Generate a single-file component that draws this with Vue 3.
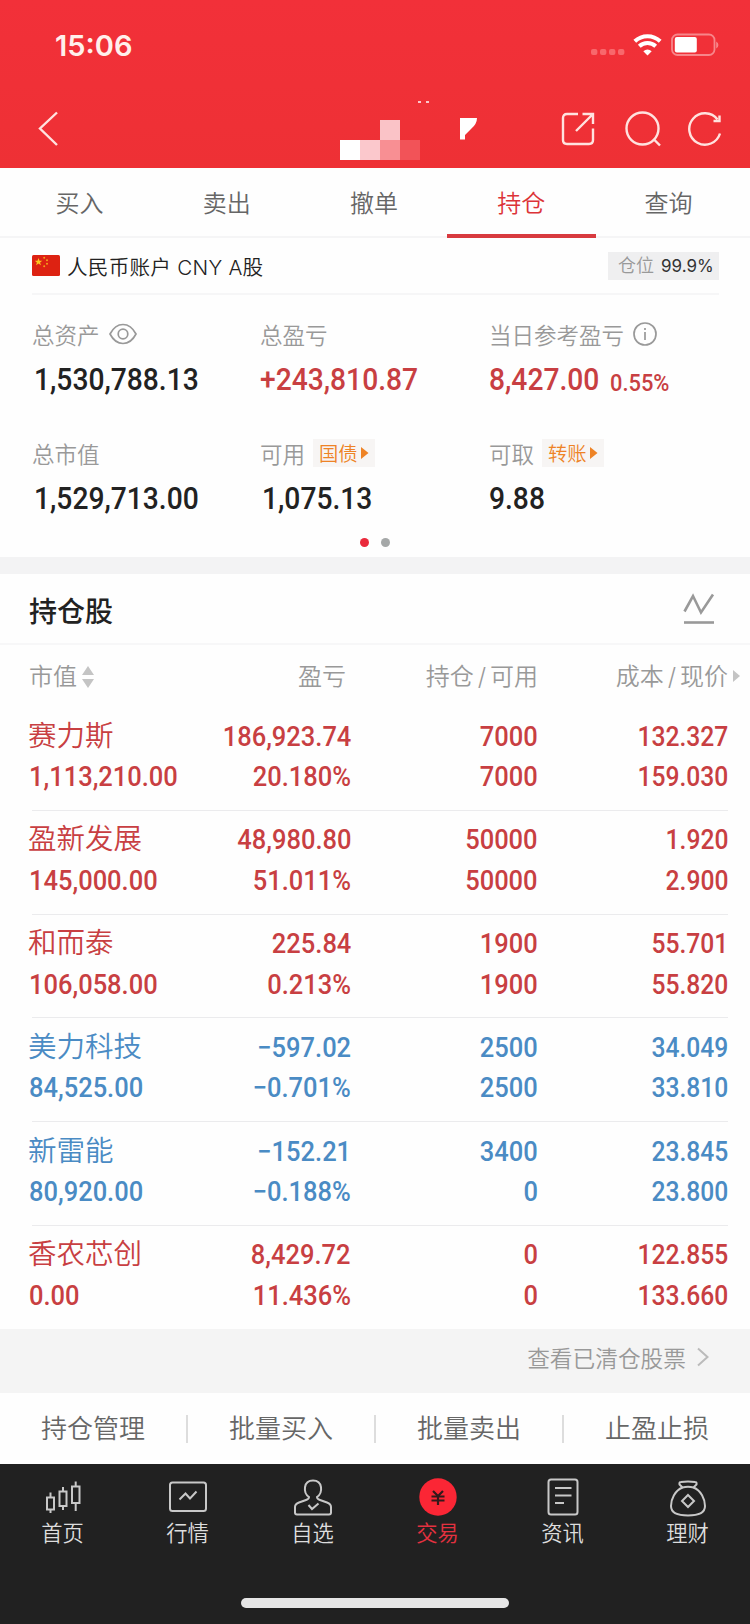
<template>
  <div class="page">
    <header class="header">
      <div class="status-bar">
        <span class="time">15:06</span>
        <div class="status-icons">
          <svg class="signal" width="34" height="6" viewBox="0 0 34 6">
            <rect v-for="n in 4" :key="n" :x="(n - 1) * 9" y="0" width="6.4" height="6" rx="2" />
          </svg>
          <svg class="wifi" width="29" height="22" viewBox="0 0 29 22">
            <path d="M1.8 7.2 A18.5 18.5 0 0 1 27.2 7.2" />
            <path d="M6.3 12.3 A12 12 0 0 1 22.7 12.3" />
            <path class="wifi-dot" d="M14.5 21.5 L10.3 17.2 Q14.5 13.6 18.7 17.2 Z" />
          </svg>
          <svg class="battery" width="48" height="24" viewBox="0 0 48 24">
            <rect class="case" x="1" y="1.5" width="42.5" height="20.5" rx="5.5" />
            <path class="cap" d="M45.2 8.5 Q47.4 9.5 47.4 12 Q47.4 14.5 45.2 15.5 Z" />
            <rect class="level" x="3.8" y="4" width="22" height="15.5" rx="2" />
          </svg>
        </div>
      </div>
      <div class="nav-bar">
        <svg class="back" width="22" height="36" viewBox="0 0 22 36">
          <path d="M20 1.5 L3 17.5 L20 34" />
        </svg>
        <svg class="title" width="140" height="64" viewBox="0 0 140 64">
          <rect x="0" y="43" width="20" height="20" fill="#ffffff" />
          <rect x="20" y="43" width="20" height="20" fill="#fbc8cc" />
          <rect x="40" y="23" width="20" height="20" fill="#fac3c7" />
          <rect x="40" y="43" width="20" height="20" fill="#f88f93" />
          <rect x="60" y="43" width="20" height="20" fill="#f25358" />
          <rect x="78" y="4" width="3" height="2" fill="#fbc8cc" />
          <rect x="86" y="4" width="3" height="2" fill="#fbc8cc" />
          <path d="M120 21 H137 Q137 27 131 32 L125 38 V42.5 H120 Z" fill="#ffffff" />
        </svg>
        <div class="nav-actions">
          <svg width="34" height="36" viewBox="0 0 34 36">
            <path d="M17 3 H6 Q2 3 2 7 V29 Q2 33 6 33 H28 Q32 33 32 29 V17.5" />
            <path d="M21.5 3 H32 V13 M15 20 L31.5 3.5" />
          </svg>
          <svg width="36" height="36" viewBox="0 0 36 36">
            <circle cx="17.5" cy="17.5" r="16" />
            <path d="M28.5 28 L35 34.5" />
          </svg>
          <svg width="34" height="36" viewBox="0 0 34 36">
            <path d="M32 22.5 A15.7 15.7 0 1 1 29.5 8.5" />
            <path d="M31.5 4.5 V10 H25.5" />
          </svg>
        </div>
      </div>
    </header>

    <nav class="tabs">
      <div v-for="tab in tabs" :key="tab" class="tab" :class="{ active: tab === activeTab }" @click="activeTab = tab">
        {{ tab }}
      </div>
    </nav>

    <section class="account">
      <div class="account-head">
        <svg class="flag" width="28" height="21" viewBox="0 0 28 21">
          <rect width="28" height="21" rx="1.5" fill="#dd2212" />
          <path fill="#fcc81e" d="M6.5 3 L7.5 5.7 L10.3 5.8 L8.1 7.5 L8.9 10.2 L6.5 8.6 L4.1 10.2 L4.9 7.5 L2.7 5.8 L5.5 5.7 Z" />
          <g fill="#f3a21c">
            <circle cx="12.2" cy="2.8" r="1" />
            <circle cx="15" cy="5.2" r="1" />
            <circle cx="15" cy="8.8" r="1" />
            <circle cx="12.2" cy="11.3" r="1" />
          </g>
        </svg>
        <span class="account-name">人民币账户 CNY A股</span>
        <div class="position">仓位 <b>99.9%</b></div>
      </div>

      <div class="assets">
        <div v-for="item in assets" :key="item.label" class="asset">
          <div class="asset-label">
            <span>{{ item.label }}</span>
            <svg v-if="item.icon === 'eye'" class="label-icon" width="28" height="22" viewBox="0 0 28 22">
              <path d="M1 11 Q6 1.5 14 1.5 T27 11 Q22 20.5 14 20.5 T1 11 Z" />
              <circle cx="14" cy="11" r="4.8" />
            </svg>
            <svg v-if="item.icon === 'info'" class="label-icon" width="24" height="24" viewBox="0 0 24 24">
              <circle cx="12" cy="12" r="11" />
              <path d="M12 10 V18 M12 6 V8" />
            </svg>
            <span v-if="item.link" class="chip">
              {{ item.link }}
              <svg width="8" height="12" viewBox="0 0 8 12"><path d="M0 0 L7.5 6 L0 12 Z" /></svg>
            </span>
          </div>
          <div class="asset-value" :class="{ up: item.up }">
            <span class="num" :class="{ inset: item.value[0] === '1' }">{{ item.value }}</span>
            <span v-if="item.rate" class="rate">{{ item.rate }}</span>
          </div>
        </div>
      </div>
      <div class="dots"><i class="on"></i><i></i></div>
    </section>

    <section class="holdings">
      <div class="holdings-head">
        <h2>持仓股</h2>
        <svg class="chart-icon" width="32" height="32" viewBox="0 0 32 32">
          <path d="M1.5 18.5 L10 3 L18 19.5 L30 1.5" />
          <path d="M1 29.5 H31" />
        </svg>
      </div>
      <div class="row columns">
        <div class="first">
          市值
          <svg width="12" height="22" viewBox="0 0 12 22">
            <path d="M6 0 L12 9 H0 Z M0 13 H12 L6 22 Z" />
          </svg>
        </div>
        <div class="profit-title">盈亏</div>
        <div>持仓<em>/</em>可用</div>
        <div class="price-title">
          成本<em>/</em>现价
          <svg class="more" width="7" height="12" viewBox="0 0 7 12"><path d="M0 0 L7 6 L0 12 Z" /></svg>
        </div>
      </div>
      <div v-for="s in stocks" :key="s.name" class="row stock" :class="s.down ? 'down' : 'up'">
        <div class="first">
          <p class="name">{{ s.name }}</p>
          <p><span class="num">{{ s.value }}</span></p>
        </div>
        <div v-for="(col, i) in s.cols" :key="i">
          <p v-for="(text, j) in col" :key="j"><span class="num">{{ text }}</span></p>
        </div>
      </div>
    </section>

    <div class="cleared">
      查看已清仓股票
      <svg width="12" height="20" viewBox="0 0 12 20"><path d="M1 1.5 L10.5 10 L1 18.5" /></svg>
    </div>

    <div class="actions">
      <div v-for="a in actions" :key="a" class="action">{{ a }}</div>
    </div>

    <footer class="tab-bar">
      <div class="menu">
        <div v-for="m in menu" :key="m.label" class="menu-item" :class="{ current: m.icon === 'trade' }">
          <svg width="40" height="40" viewBox="0 0 40 40">
            <g v-if="m.icon === 'home'">
              <path d="M4 20.5 H11 V32.5 H4 Z M16.5 14.5 H23.5 V29 H16.5 Z M29 9.5 H36.500 V26 H29 Z" />
              <path d="M7.500 15.500 V20.500 M7.500 32.500 V36 M20 10 V14.500 M20 29 V33 M32.700 4.500 V9.500 M32.700 26 V34" />
            </g>
            <g v-else-if="m.icon === 'market'">
              <rect x="2" y="5.5" width="36" height="28.5" rx="2.5" />
              <path d="M11.5 22.5 L17.5 16.5 L22 21.5 L28.5 14.5" />
            </g>
            <g v-else-if="m.icon === 'self'">
              <path d="M16 20 C10 16 10 3.500 20 3.500 S30 16 24 20 Q24 22 27 23 L34 25.500 Q38 27 38 30 V35.500 Q38 37.500 36 37.500 H4 Q2 37.500 2 35.500 V30 Q2 27 6 25.500 L13 23 Q16 22 16 20 Z" />
              <path d="M15.5 28 L19 32 L25.5 26.5" />
            </g>
            <g v-else-if="m.icon === 'trade'">
              <circle class="coin" cx="20" cy="20" r="18.7" />
              <path class="yen" d="M15 14 L20 19 L25 14 M13.5 19.5 H26.5 M13.5 23.5 H26.5 M20 19 V28" />
            </g>
            <g v-else-if="m.icon === 'news'">
              <rect x="5.5" y="2.5" width="29" height="35" rx="2.5" />
              <path d="M12 11 H28.5 M12 18.5 H28.5 M12 26 H21" />
            </g>
            <g v-else>
              <path d="M14.5 10.500 L11.5 7.500 Q11 5 13 5 Q20 4 27 5 Q29 5 28.5 7.500 L25.5 10.500 Q20 9 14.5 10.500 Z" />
              <path d="M14.5 10.500 C7 13.500 3 22 3 29 C3 36 9 38.500 20 38.500 S37 36 37 29 C37 22 33 13.500 25.5 10.500" />
              <path d="M20 18 L26 24 L20 30 L14 24 Z" />
            </g>
          </svg>
          <span>{{ m.label }}</span>
        </div>
      </div>
      <div class="home-indicator"></div>
    </footer>
  </div>
</template>

<script setup>
import { ref } from 'vue';

const tabs = ['买入', '卖出', '撤单', '持仓', '查询'];
const activeTab = ref('持仓');

const assets = ref([
  { label: '总资产', value: '1,530,788.13', icon: 'eye' },
  { label: '总盈亏', value: '+243,810.87', up: true },
  { label: '当日参考盈亏', value: '8,427.00', rate: '0.55%', up: true, icon: 'info' },
  { label: '总市值', value: '1,529,713.00' },
  { label: '可用', value: '1,075.13', link: '国债' },
  { label: '可取', value: '9.88', link: '转账' }
]);

// cols: 盈亏, 持仓/可用, 成本/现价
const stocks = ref([
  { name: '赛力斯', value: '1,113,210.00', cols: [['186,923.74', '20.180%'], ['7000', '7000'], ['132.327', '159.030']] },
  { name: '盈新发展', value: '145,000.00', cols: [['48,980.80', '51.011%'], ['50000', '50000'], ['1.920', '2.900']] },
  { name: '和而泰', value: '106,058.00', cols: [['225.84', '0.213%'], ['1900', '1900'], ['55.701', '55.820']] },
  { name: '美力科技', value: '84,525.00', down: true, cols: [['−597.02', '−0.701%'], ['2500', '2500'], ['34.049', '33.810']] },
  { name: '新雷能', value: '80,920.00', down: true, cols: [['−152.21', '−0.188%'], ['3400', '0'], ['23.845', '23.800']] },
  { name: '香农芯创', value: '0.00', cols: [['8,429.72', '11.436%'], ['0', '0'], ['122.855', '133.660']] }
]);

const actions = ['持仓管理', '批量买入', '批量卖出', '止盈止损'];

const menu = [
  { label: '首页', icon: 'home' },
  { label: '行情', icon: 'market' },
  { label: '自选', icon: 'self' },
  { label: '交易', icon: 'trade' },
  { label: '资讯', icon: 'news' },
  { label: '理财', icon: 'money' }
];
</script>

<style>
body {
  margin: 0;
  background: #fff;
}
</style>

<style scoped>
.page {
  width: 750px;
  height: 1624px;
  overflow: hidden;
  display: flex;
  flex-direction: column;
  background: #fefefe;
  font-family: Inter, "Noto Sans CJK SC", sans-serif;
  font-weight: 350;
  color: #222;
}

svg {
  display: block;
  flex: none;
  fill: none;
}

p,
h2 {
  margin: 0;
}

/* Header */
.header {
  height: 168px;
  flex: none;
  background: linear-gradient(#f23039, #ee3035);
}

.status-bar {
  height: 90px;
  display: flex;
  justify-content: space-between;
  padding: 0 31px 0 55px;
  box-sizing: border-box;
  align-items: center;
}

.time {
  font-size: 29px;
  font-weight: 600;
  color: #fff0ec;
}

.status-icons {
  display: flex;
  align-items: center;
}

.signal {
  fill: #f8686c;
  margin: 14px 8px 0 0;
}

.wifi {
  stroke: #fff;
  stroke-width: 4;
  margin-right: 9px;
}

.wifi-dot {
  fill: #fff;
  stroke: none;
}

.case {
  stroke: #f7868a;
  stroke-width: 1.8;
}

.cap {
  fill: #f7868a;
}

.level {
  fill: #fff;
}

.nav-bar {
  height: 78px;
  display: flex;
  align-items: center;
  padding: 0 28px 0 37px;
}

.back,
.nav-actions svg {
  stroke: #ffe2df;
  stroke-width: 2.4;
}

.title {
  margin: 0 auto 0 281px;
}

.nav-actions {
  display: flex;
  gap: 29px;
}

.nav-actions svg:first-child {
  margin-right: 1px;
}

.nav-actions svg:last-child {
  margin-left: -2px;
}

/* Tabs */
.tabs {
  height: 70px;
  flex: none;
  display: flex;
  padding: 0 8px 0 6px;
  box-sizing: border-box;
  border-bottom: 2px solid #f5f5f6;
}

.tab {
  flex: 1;
  height: 68px;
  line-height: 72px;
  text-align: center;
  font-size: 24px;
  color: #666;
  position: relative;
}

.tab.active {
  color: #dc3338;
}

.tab.active::after {
  content: '';
  position: absolute;
  left: -1px;
  right: -1px;
  bottom: -2px;
  height: 4px;
  background: #d83a3f;
}

/* Account */
.account {
  height: 319px;
  flex: none;
  border-bottom: 17px solid #f3f3f4;
}

.account-head {
  height: 57px;
  box-sizing: border-box;
  margin: 0 31px 0 32px;
  display: flex;
  align-items: center;
  border-bottom: 2px solid #f6f6f7;
}

.account-name {
  margin-left: 7px;
  font-size: 20.6px;
  letter-spacing: 0.25px;
}

.position {
  margin-left: auto;
  width: 111px;
  height: 28px;
  line-height: 28px;
  box-sizing: border-box;
  padding-left: 10px;
  background: #efeff0;
  color: #999;
  font-size: 18px;
  white-space: nowrap;
}

.position b {
  margin-left: 2px;
  font-size: 17px;
  font-weight: 400;
  color: #333;
}

.assets {
  display: grid;
  grid-template-columns: 228px 229px 1fr;
  grid-auto-rows: 119px;
  padding: 24px 0 0 32px;
}

.asset-label {
  height: 30px;
  display: flex;
  align-items: center;
  font-size: 22.5px;
  color: #999;
}

.label-icon {
  margin-left: 9px;
  stroke: #999;
  stroke-width: 1.7;
}

.chip {
  display: flex;
  align-items: center;
  gap: 3px;
  height: 28px;
  margin-left: 8px;
  padding: 0 6px;
  background: #f7f5f4;
  color: #ee8326;
  font-size: 19.3px;
}

.chip svg {
  fill: #ee8326;
}

.asset-value {
  height: 36px;
  line-height: 36px;
  margin-top: 13px;
  display: flex;
  font-size: 31px;
}

.num,
.rate {
  display: inline-block;
  font-family: Roboto, sans-serif;
  font-weight: 500;
  transform: scaleX(0.91);
  transform-origin: left;
}

.inset {
  margin-left: 2px;
}

.rate {
  font-size: 24px;
  margin-top: 3px;
}

.up {
  color: #c83f42;
}

.down {
  color: #4a8bc4;
}

.dots {
  display: flex;
  justify-content: center;
  gap: 12px;
  margin-top: -19px;
}

.dots i {
  width: 9px;
  height: 9px;
  border-radius: 50%;
  background: #a5a8a8;
}

.dots .on {
  background: #ea2a3c;
}

/* Holdings */
.holdings {
  height: 755px;
  flex: none;
}

.holdings-head {
  height: 71px;
  box-sizing: border-box;
  padding: 0 35px 0 29px;
  display: flex;
  justify-content: space-between;
  align-items: center;
  border-bottom: 2px solid #f7f7f8;
}

.holdings-head h2 {
  margin-top: 2px;
  font-size: 28px;
  font-weight: 500;
}

.chart-icon {
  stroke: #999;
  stroke-width: 2.6;
}

.row {
  display: grid;
  grid-template-columns: 167px 152px 187px 190px;
  margin: 0 22px 0 32px;
  text-align: right;
}

.first {
  text-align: left;
  margin-left: -3px;
}

.columns {
  height: 62px;
  line-height: 63px;
  font-size: 24px;
  color: #999;
}

.columns .first {
  display: flex;
  align-items: center;
  gap: 5px;
}

.columns .first svg {
  fill: #c4c4c4;
}

.columns em {
  font-style: normal;
  margin: 0 4px;
}

.profit-title {
  padding-right: 5px;
}

.price-title {
  position: relative;
}

.more {
  position: absolute;
  right: -12px;
  top: 25px;
  fill: #c4c4c4;
}

.stock {
  height: 103.8px;
  box-sizing: border-box;
  padding-top: 8.5px;
  border-bottom: 1px solid #ebebed;
  font-size: 28px;
}

.stock:last-child {
  border-bottom: none;
}

.stock p {
  height: 40.5px;
  line-height: 40px;
  white-space: nowrap;
}

.stock .name {
  margin-left: -1px;
  font-size: 28.5px;
}

.stock .num {
  transform-origin: right;
}

.stock .first .num {
  transform-origin: left;
}

.stock > div:last-child .num {
  transform: scaleX(0.88);
}

/* Bottom */
.cleared {
  height: 64px;
  flex: none;
  box-sizing: border-box;
  padding: 0 41px 8px 0;
  display: flex;
  align-items: center;
  justify-content: flex-end;
  gap: 11px;
  background: #f4f4f4;
  color: #999;
  font-size: 22.7px;
}

.cleared svg {
  stroke: #bbb;
  stroke-width: 2;
}

.actions {
  height: 71px;
  flex: none;
  display: flex;
  align-items: center;
}

.action {
  flex: 1;
  line-height: 28px;
  text-align: center;
  font-size: 26px;
  color: #666;
}

.action + .action {
  border-left: 2px solid #ddd;
}

.tab-bar {
  flex: 1;
  background: #212121;
  display: flex;
  flex-direction: column;
  justify-content: space-between;
  align-items: center;
}

.menu {
  width: 100%;
  display: flex;
  padding-top: 13px;
}

.menu-item {
  flex: 1;
  display: flex;
  flex-direction: column;
  align-items: center;
  font-size: 21.3px;
  line-height: 30px;
  color: #ddd;
}

.menu-item svg {
  stroke: #c8c8c8;
  stroke-width: 2;
}

.menu-item.current {
  color: #e43140;
}

.menu-item span {
  margin-top: 1px;
}

.menu-item .coin {
  fill: #fb2635;
  stroke: none;
}

.menu-item .yen {
  stroke: #33191b;
  stroke-width: 2.2;
}

.home-indicator {
  width: 268px;
  height: 10px;
  margin-bottom: 16px;
  border-radius: 5px;
  background: #e6e6e6;
}
</style>
